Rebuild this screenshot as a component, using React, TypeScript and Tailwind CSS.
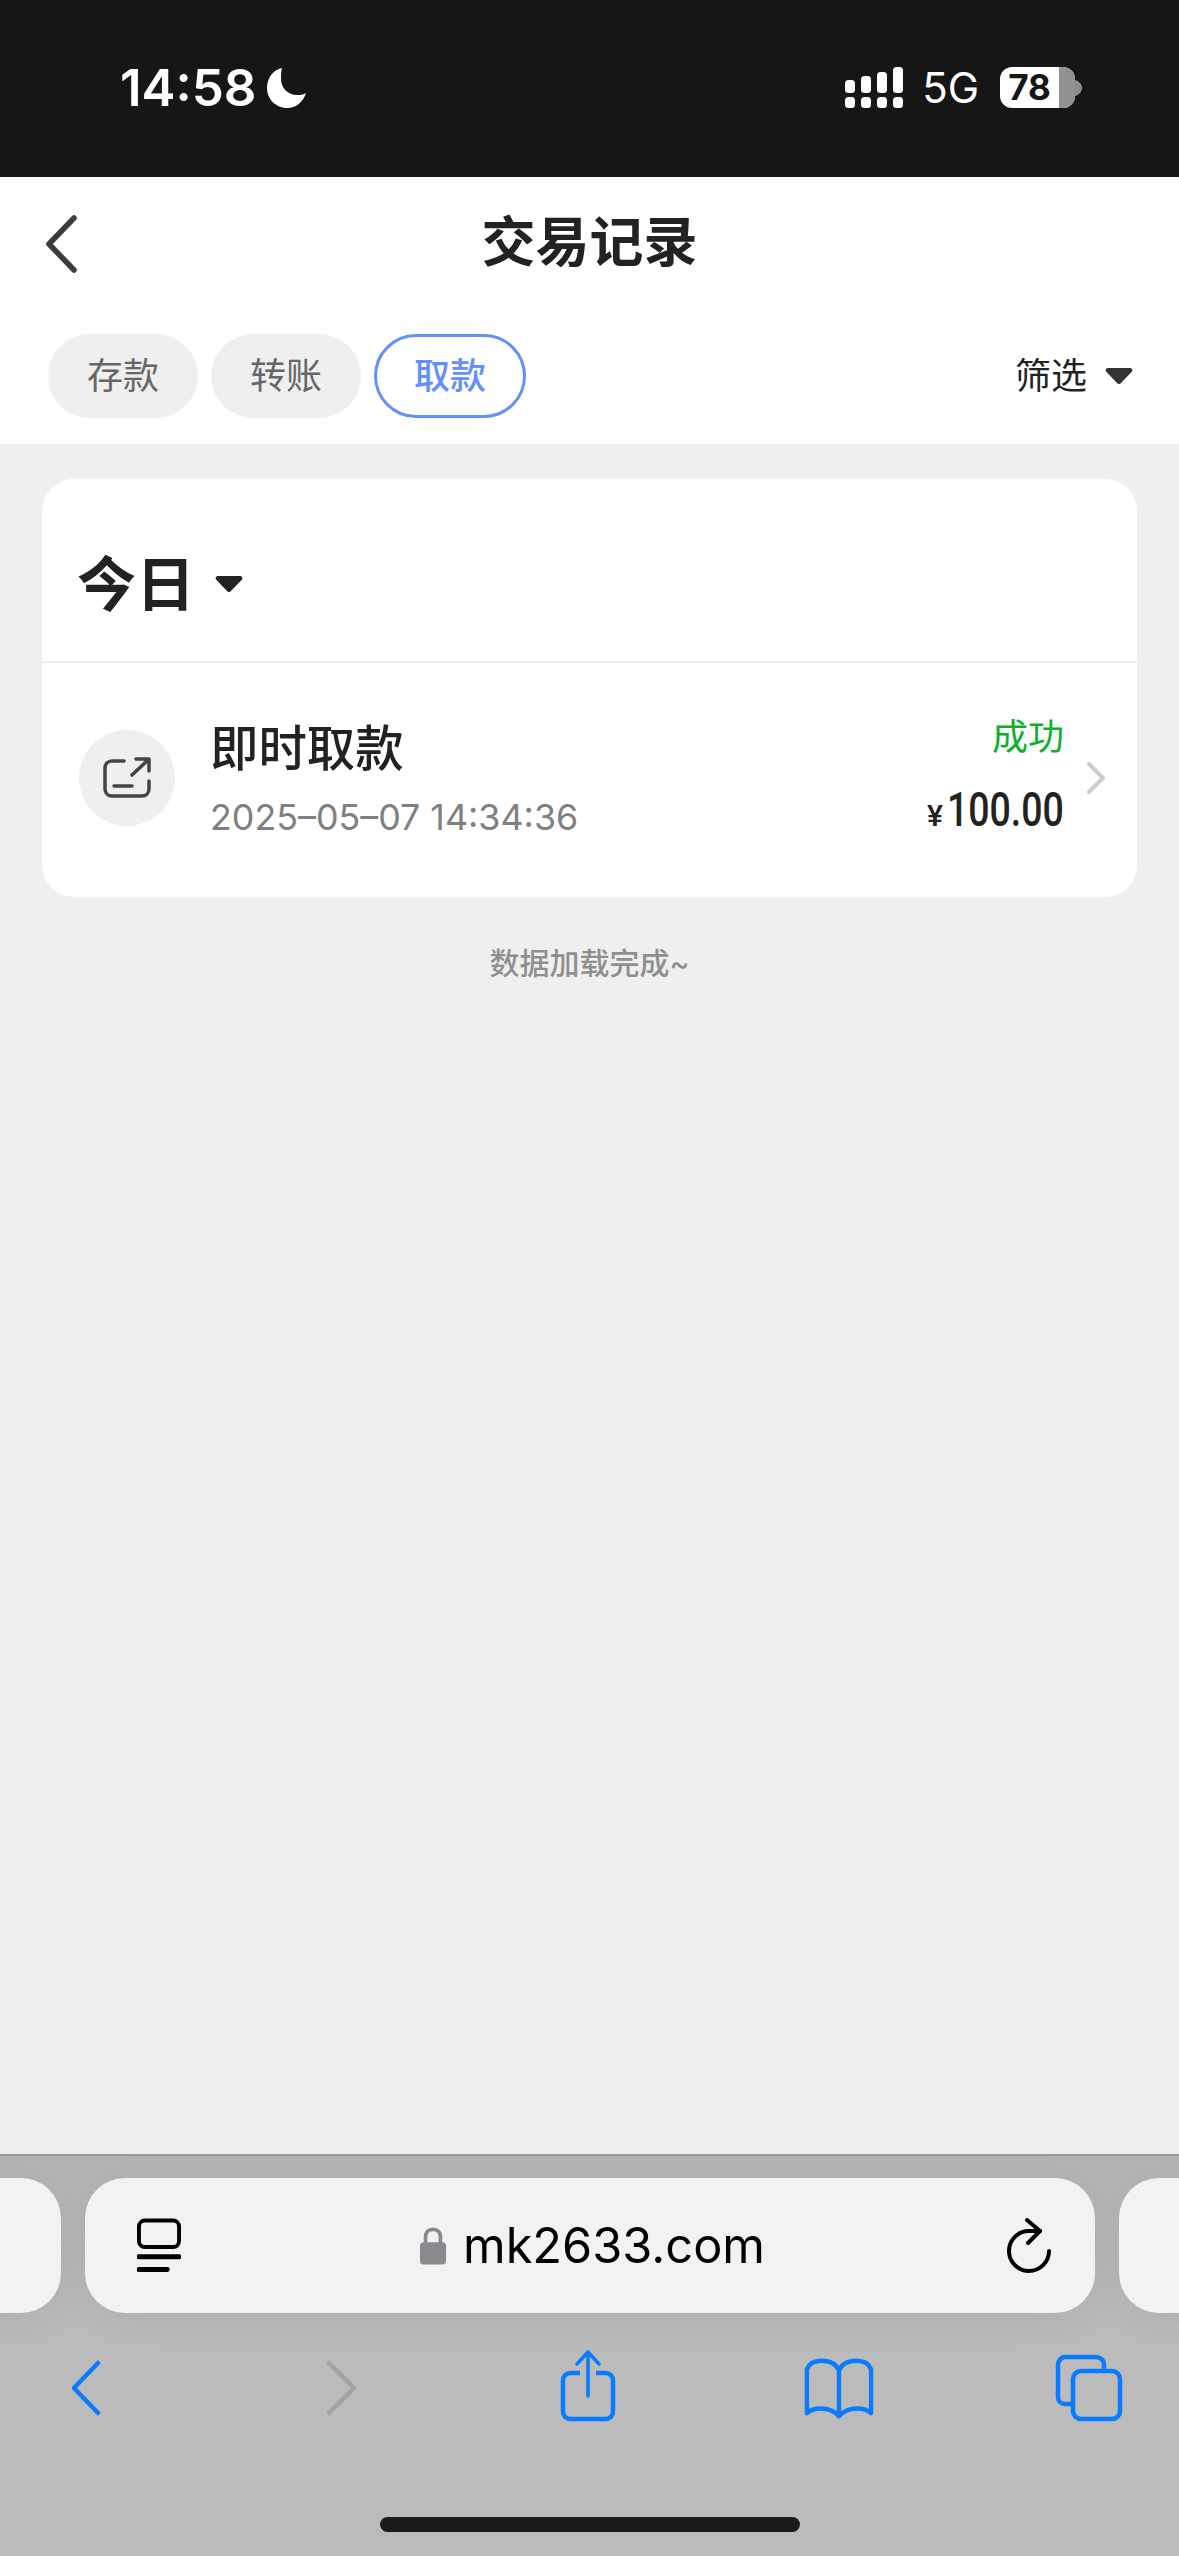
const cjk = "font-['Inter','Noto_Sans_CJK_SC',sans-serif]";

function Triangle({ className }: { className: string }) {
  return (
    <svg viewBox="0 0 28 18" className={className} fill="currentColor">
      <path d="M3 1h22c2 0 3 2 2 3.500L16 16c-1 1.300-3 1.300-4 0L1 4.500C0 3 1 1 3 1z" />
    </svg>
  );
}

function Tab({ label, active }: { label: string; active?: boolean }) {
  return (
    <div
      className={
        active
          ? "flex h-[84px] w-[152px] items-center justify-center rounded-[42px] border-[3px] border-[#6590fa] bg-white text-[36px] font-medium text-[#6590fa]"
          : "flex h-[84px] w-[150px] items-center justify-center rounded-[42px] bg-[#efefef] text-[36px] text-[#666666]"
      }
    >
      {label}
    </div>
  );
}

function Signal() {
  return (
    <svg width="58" height="41" viewBox="0 0 58 41" fill="white">
      <rect x="0" y="30" width="10" height="11" rx="3.500" />
      <rect x="16" y="30" width="10" height="11" rx="3.500" />
      <rect x="32" y="30" width="10" height="11" rx="3.500" />
      <rect x="48" y="30" width="10" height="11" rx="3.500" />
      <rect x="0" y="13" width="10" height="13" rx="3.500" />
      <rect x="16" y="9" width="10" height="17" rx="3.500" />
      <rect x="32" y="5" width="10" height="21" rx="3.500" />
      <rect x="48" y="0" width="10" height="26" rx="3.500" />
    </svg>
  );
}

function Battery() {
  return (
    <div className="relative ml-[21px] flex h-[41px] w-[75px] items-center overflow-hidden rounded-[12px] bg-white">
      <div className="flex h-full w-[59px] items-center justify-center text-[35px] font-bold leading-none text-[#161616]">78</div>
      <div className="h-full w-[16px] bg-[#929292]" />
    </div>
  );
}

export default function App() {
  return (
    <div className={`flex h-[2556px] w-[1179px] flex-col overflow-hidden bg-[#efefef] ${cjk}`}>
      {/* status bar */}
      <div className="flex h-[177px] shrink-0 items-start justify-between bg-[#161616] pl-[120px] pr-[96px] pt-[67px] text-white">
        <div className="flex items-center">
          <span className="text-[51px] font-semibold leading-[42px]">14:58</span>
          <svg width="40" height="42" viewBox="0 0 40 42" className="ml-[10px]" fill="white">
            <path d="M15 1C6 3 0 11 0 21C0 32 9 41 20 41C29 41 36 35 39 26C36 28 33 28 30 28C21 28 14 21 14 12C14 8 14 4 15 1z" />
          </svg>
        </div>
        <div className="flex items-center">
          <Signal />
          <span className="ml-[19px] text-[42px] leading-[41px]">5G</span>
          <Battery />
          <svg width="8" height="16" viewBox="0 0 8 16" fill="#8e8e8e"><path d="M0 0c4 1 7 4 7 8s-3 7-7 8z" /></svg>
        </div>
      </div>

      {/* nav */}
      <div className="relative flex h-[134px] shrink-0 items-center justify-center bg-white pb-[2px]">
        <svg width="34" height="60" viewBox="0 0 34 60" className="absolute left-[44px] top-[37px]" fill="none" stroke="#3c3c3c" strokeWidth="5.500" strokeLinecap="round" strokeLinejoin="round">
          <path d="M30 4 5 30l25 26" />
        </svg>
        <h1 className="text-[54px] font-semibold leading-none text-[#222222]">交易记录</h1>
      </div>

      {/* tabs */}
      <div className="flex h-[133px] shrink-0 items-start justify-between bg-white pl-[48px] pr-[46px] pt-[23px]">
        <div className="flex gap-[13px]">
          <Tab label="存款" />
          <Tab label="转账" />
          <Tab label="取款" active />
        </div>
        <div className="flex h-[84px] items-center gap-[18px] text-[36px] text-[#222222]">
          <span>筛选</span>
          <Triangle className="h-[18px] w-[28px] text-[#333333]" />
        </div>
      </div>

      {/* content */}
      <main className="flex-1 px-[42px] pt-[35px]">
        <div className="overflow-hidden rounded-[32px] bg-white">
          <div className="flex h-[184px] items-center gap-[20px] border-b-2 border-[#eeeeee] pl-[35px] pt-[28px]">
            <span className="text-[59px] font-bold leading-none text-[#222222]">今日</span>
            <Triangle className="h-[18px] w-[28px] text-[#222222]" />
          </div>
          <div className="flex h-[234px] items-center pl-[37px] pr-[31px]">
            <div className="mb-[4px] flex h-[96px] w-[96px] shrink-0 items-center justify-center rounded-full bg-[#efefef]">
              <svg width="48" height="42" viewBox="0 0 48 42" fill="none" stroke="#444444" strokeWidth="3.500" strokeLinecap="round" strokeLinejoin="round">
                <path d="M21 4H9C5 4 2 7 2 11v21c0 4 3 7 7 7h30c4 0 7-3 7-7V24" />
                <path d="M11 29h18" />
                <path d="M29 18 45 3M33 2h13v12" />
              </svg>
            </div>
            <div className="ml-[35px] mb-[2px] flex flex-1 flex-col">
              <span className="text-[48.400px] font-medium leading-[60px] text-[#222222]">即时取款</span>
              <span className="mt-[16px] text-[35.800px] leading-[44px] text-[#808080]">2025–05–07 14:34:36</span>
            </div>
            <div className="flex flex-col items-end self-start pt-[52px]">
              <span className="text-[36px] leading-[44px] text-[#0db02b]">成功</span>
              <div className="mt-[26px] flex h-[50px] items-baseline whitespace-nowrap font-['Roboto',sans-serif] font-medium leading-[50px] text-[#222222]">
                <span className="text-[30px]">¥</span>
                <span className="ml-[6px] flex w-[115px] justify-end">
                  <span className="origin-right scale-x-[0.78] text-[48px]">100.00</span>
                </span>
              </div>
            </div>
            <svg width="20" height="34" viewBox="0 0 20 34" className="mb-[4px] ml-[22px]" fill="none" stroke="#cccccc" strokeWidth="4" strokeLinecap="round" strokeLinejoin="round">
              <path d="M3 3l14 14L3 31" />
            </svg>
          </div>
        </div>
        <p className="mt-[46px] text-center text-[30px] font-medium leading-[40px] text-[#8f8f8f]">数据加载完成~</p>
      </main>

      {/* browser chrome */}
      <div className="flex h-[402px] shrink-0 flex-col border-t-2 border-[#9a9a9a] bg-linear-to-b from-[#b3b3b3] to-[#bbbbbb] to-[45%]">
        <div className="mt-[22px] flex justify-center gap-[24px]">
          <div className="h-[135px] w-[100px] shrink-0 rounded-[40px] bg-[#f2f2f2] shadow-[0_6px_40px_rgba(0,0,0,0.06)]" />
          <div className="flex h-[135px] w-[1010px] shrink-0 items-center justify-between rounded-[40px] bg-[#f2f2f2] pl-[52px] pr-[43px] shadow-[0_6px_40px_rgba(0,0,0,0.06)]">
            <svg width="44" height="56" viewBox="0 0 45 56" fill="none" stroke="#000" strokeLinecap="round" strokeWidth="4">
              <rect x="2" y="2" width="41" height="27" rx="6" />
              <path d="M2 39h41M2 52h29" strokeWidth="5" />
            </svg>
            <div className="mr-[1px] mt-[2px] flex items-center">
              <svg width="26" height="40" viewBox="0 0 28 40" fill="none">
                <path d="M6 18V10c0-5 3-8 8-8s8 3 8 8v8" stroke="#8a8a8e" strokeWidth="4" />
                <rect x="0" y="16" width="28" height="24" rx="4" fill="#8a8a8e" />
              </svg>
              <span className="ml-[17px] text-[48.700px] leading-none text-black">mk2633.com</span>
            </div>
            <svg width="46" height="56" viewBox="0 0 46 56" fill="none" stroke="#000" strokeWidth="4" strokeLinecap="round" strokeLinejoin="round">
              <path d="M43 33a20 20 0 1 1-20-20h11" />
              <path d="M21 2l13 11-12 12" />
            </svg>
          </div>
          <div className="h-[135px] w-[100px] shrink-0 rounded-[40px] bg-[#f2f2f2] shadow-[0_6px_40px_rgba(0,0,0,0.06)]" />
        </div>

        <div className="mt-[35px] flex justify-between pl-[51px] pr-[54px]">
          <svg width="70" height="80" viewBox="0 0 70 80" fill="none" stroke="#0a7aff" strokeWidth="4.500" strokeLinecap="round" strokeLinejoin="round">
            <path d="M47 15 23 40l24 25" />
          </svg>
          <svg width="70" height="80" viewBox="0 0 70 80" fill="none" stroke="#a3a3a3" strokeWidth="4.500" strokeLinecap="round" strokeLinejoin="round">
            <path d="M27 15l25 25-25 25" />
          </svg>
          <svg width="70" height="80" viewBox="0 0 70 80" fill="none" stroke="#0a7aff" strokeWidth="4.500" strokeLinecap="round" strokeLinejoin="round">
            <path d="M27 25H18c-5 0-8 3-8 8v30c0 5 3 8 8 8h34c5 0 8-3 8-8V33c0-5-3-8-8-8h-9" strokeLinecap="butt" />
            <path d="M35 48V4M24 16 35 4l11 12" strokeWidth="3.500" />
          </svg>
          <svg width="70" height="80" viewBox="0 0 72 80" fill="none" stroke="#0a7aff" strokeWidth="4.500" strokeLinecap="round" strokeLinejoin="round">
            <path d="M36 22C33 15 26 12 18 12C10 12 5 15 3 21V66C9 60 26 58 36 69C46 58 63 60 69 66V21C67 15 62 12 54 12C46 12 39 15 36 22z" />
            <path d="M36 22V68" />
          </svg>
          <svg width="70" height="80" viewBox="0 0 70 80" fill="none" stroke="#0a7aff" strokeWidth="4.500" strokeLinecap="round" strokeLinejoin="round">
            <path d="M15 56H10c-4 0-7-3-7-7V17c0-4 3-8 7-8h31c4 0 8 3 8 8v4" />
            <rect x="18" y="23" width="47" height="48" rx="8" />
          </svg>
        </div>

        <div className="mt-auto mb-[24px] h-[15px] w-[420px] self-center rounded-full bg-[#1b1b1b]" />
      </div>
    </div>
  );
}
